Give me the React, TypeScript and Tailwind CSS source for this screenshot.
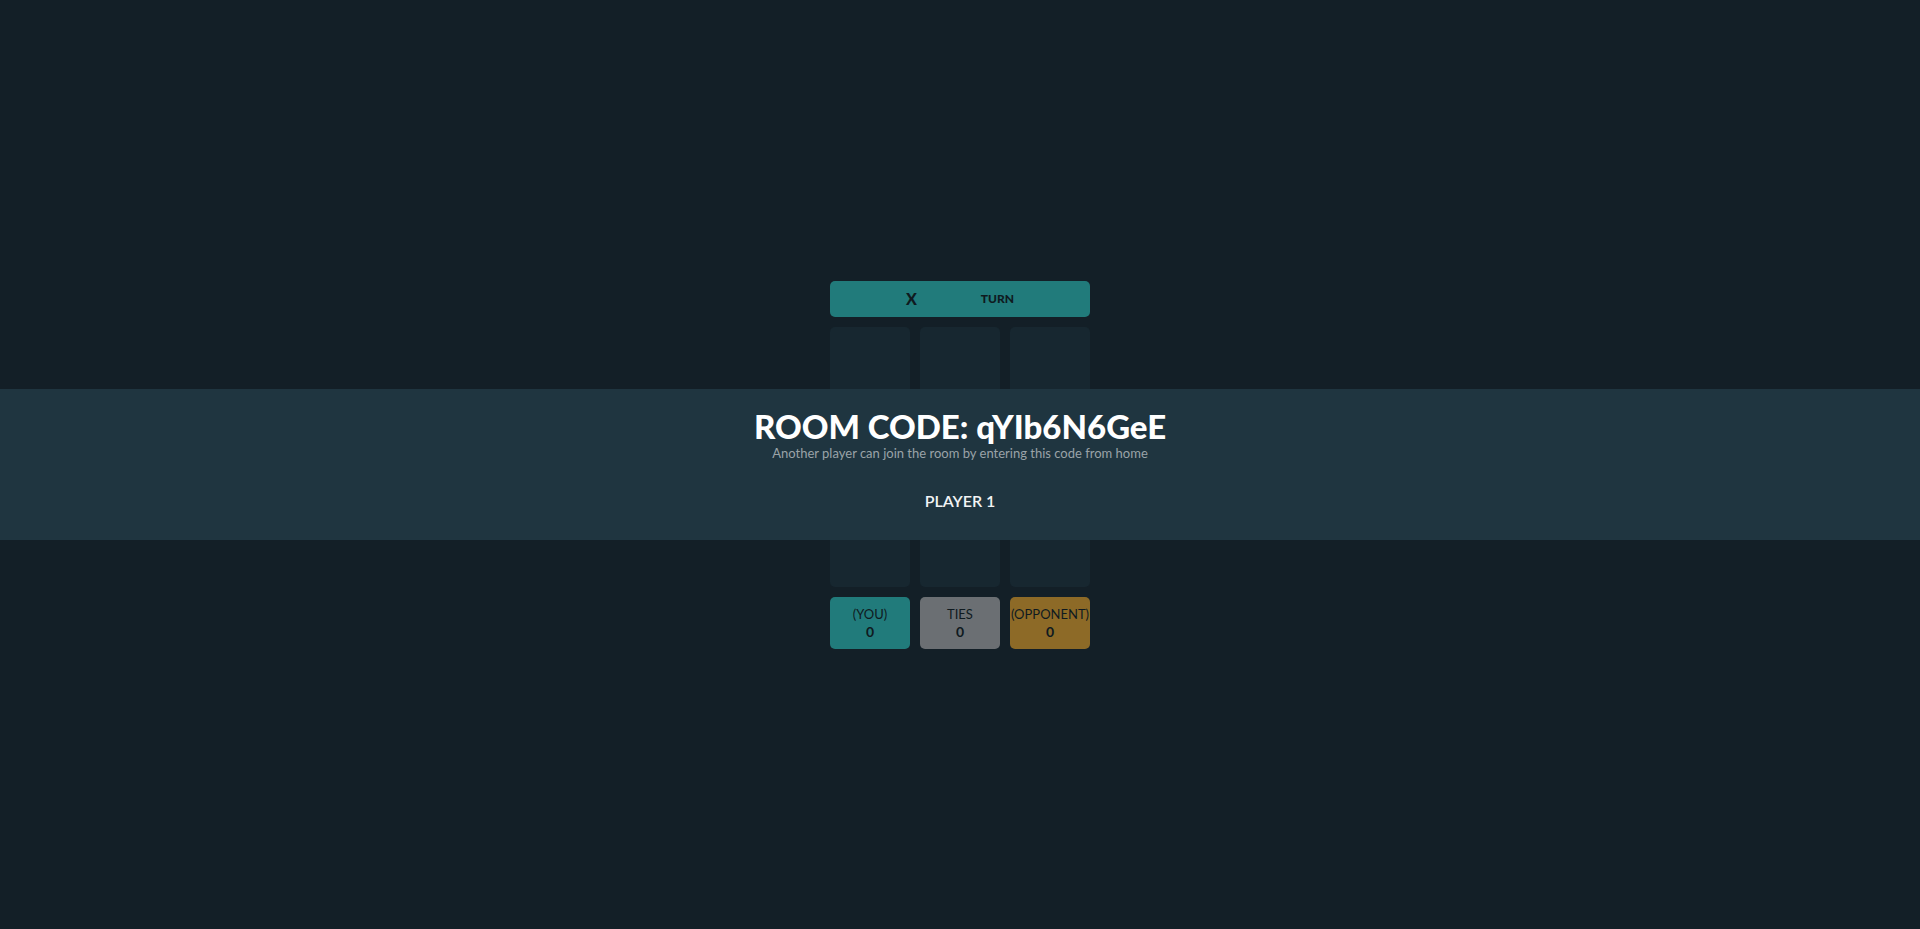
import React from "react";

const Cell = () => <div className="h-[80px] w-[80px] rounded-[5px] bg-[#172730]" />;

const Score = ({ label, value, color }: { label: string; value: number; color: string }) => (
  <div className={`flex h-[52px] w-[80px] flex-col items-center justify-center rounded-[5px] ${color} text-[#0f1a20]`}>
    <p className="text-[13px] leading-[17px]">{label}</p>
    <p className="text-[14px] font-bold leading-[17px]">{value}</p>
  </div>
);

export default function App() {
  return (
    <div
      className="relative flex h-[929px] w-full items-center justify-center bg-[#131f27]"
      style={{ fontFamily: "Lato, 'Noto Sans', sans-serif" }}
    >
      <div className="flex w-[260px] flex-col gap-[10px]">
        <div className="flex h-[36px] items-center justify-center gap-[64px] rounded-[5px] bg-[#217b7b] text-[#0f1a20]">
          <span className="text-[16px] font-black">X</span>
          <span className="text-[12px] font-black">TURN</span>
        </div>
        <div className="grid grid-cols-3 gap-[10px]">
          {Array.from({ length: 9 }).map((_, i) => (
            <Cell key={i} />
          ))}
        </div>
        <div className="grid grid-cols-3 gap-[10px]">
          <Score label="(YOU)" value={0} color="bg-[#217b7b]" />
          <Score label="TIES" value={0} color="bg-[#6b6f73]" />
          <Score label="(OPPONENT)" value={0} color="bg-[#8d6a27]" />
        </div>
      </div>

      <div className="absolute left-0 right-0 top-[389px] flex h-[151px] flex-col items-center bg-[#1f3540] pt-[18px]">
        <h1 className="text-[33px] font-black leading-[38px] text-white">ROOM CODE: qYIb6N6GeE</h1>
        <p className="text-[13px] leading-[16px] text-[#9aa3a8]">
          Another player can join the room by entering this code from home
        </p>
        <p className="mt-[28px] text-[16px] font-semibold text-[#f2f4f5]">PLAYER 1</p>
      </div>
    </div>
  );
}
